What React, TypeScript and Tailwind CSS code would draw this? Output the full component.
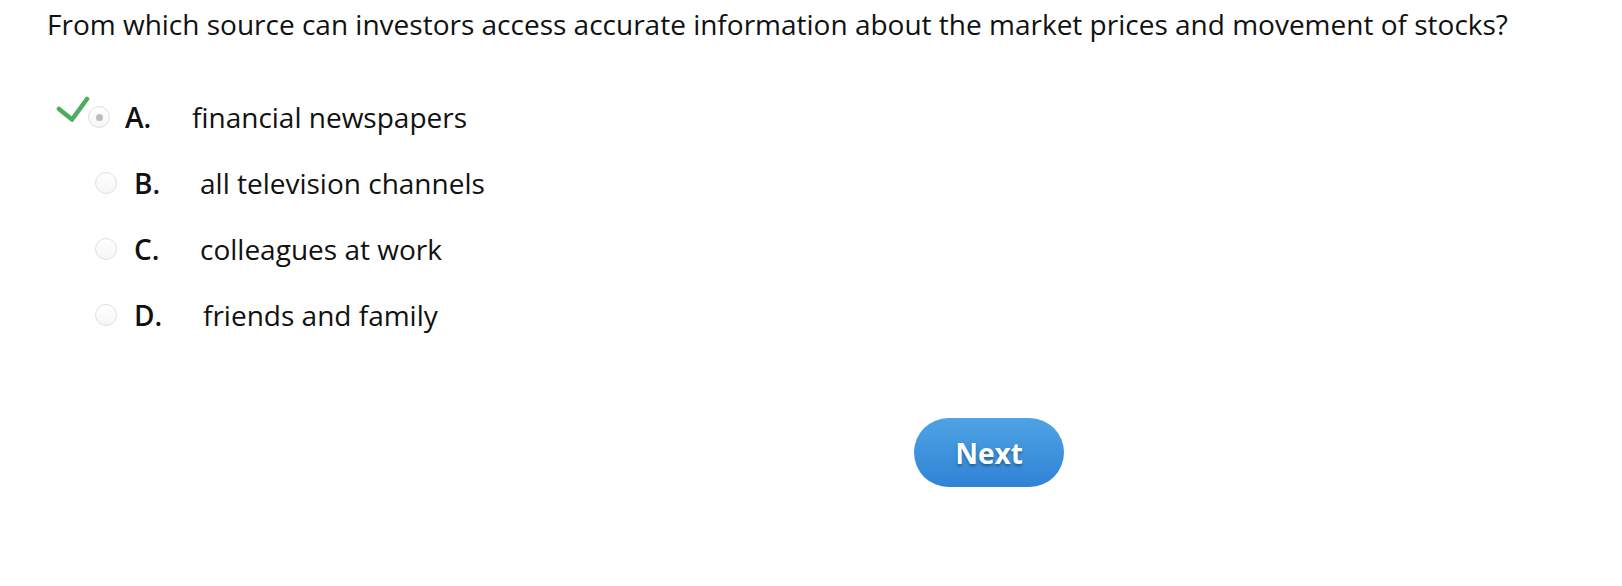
import React from 'react'

type Option = {
  letter: string
  text: string
  selected?: boolean
  shift: string
  labelGap: string
  gap: string
}

const options: Option[] = [
  { letter: 'A.', text: 'financial newspapers', selected: true, shift: 'ml-[41px]', labelGap: 'ml-[15px]', gap: 'w-[41px]' },
  { letter: 'B.', text: 'all television channels', shift: 'ml-[48px]', labelGap: 'ml-[17px]', gap: 'w-[40px]' },
  { letter: 'C.', text: 'colleagues at work', shift: 'ml-[48px]', labelGap: 'ml-[17px]', gap: 'w-[40px]' },
  { letter: 'D.', text: 'friends and family', shift: 'ml-[48px]', labelGap: 'ml-[17px]', gap: 'w-[43px]' },
]

// green tick that sits just left of the chosen radio
const Check = () => (
  <svg width="34" height="28" viewBox="0 0 34 28" className="absolute left-[-33px] top-[-11px]">
    <path d="M3 13 L16 23.5 L31 3" fill="none" stroke="#4cae5c" strokeWidth="4.5" strokeLinecap="round" strokeLinejoin="round" />
  </svg>
)

const Radio: React.FC<{ selected?: boolean }> = ({ selected }) => (
  <span className="relative flex h-[22px] w-[22px] shrink-0 items-center justify-center rounded-full border border-[#e0e0e0] bg-[linear-gradient(#ffffff,#f6f6f6)]">
    {selected && (
      <>
        <Check />
        <span className="h-[7px] w-[7px] rounded-full bg-[#bdbdbd]" />
      </>
    )}
  </span>
)

export default function App() {
  return (
    <div className="h-[586px] w-[1622px] bg-white px-[47px] text-[#111] font-['Open_Sans','Liberation_Sans',sans-serif]">
      <div className="pt-[4px] text-[28px] leading-[40px]">
        From which source can investors access accurate information about the market prices and movement of stocks?
      </div>

      <div className="mt-[53px] flex flex-col gap-[26px]">
        {options.map(o => (
          <div key={o.letter} className={`flex h-[40px] items-center ${o.shift}`}>
            <Radio selected={o.selected} />
            <span className={`${o.labelGap} w-[26px] whitespace-nowrap text-[28px] font-semibold`}>{o.letter}</span>
            <span className={`${o.gap} shrink-0`} />
            <span className="text-[28px]">{o.text}</span>
          </div>
        ))}
      </div>

      <div className="mt-[83px] ml-[867px]">
        <button className="h-[69px] w-[150px] rounded-full bg-[linear-gradient(#4fa3e3,#2f83d5)] text-[28px] font-bold text-white [text-shadow:0_2px_3px_rgba(0,0,0,0.35)]">
          Next
        </button>
      </div>
    </div>
  )
}
